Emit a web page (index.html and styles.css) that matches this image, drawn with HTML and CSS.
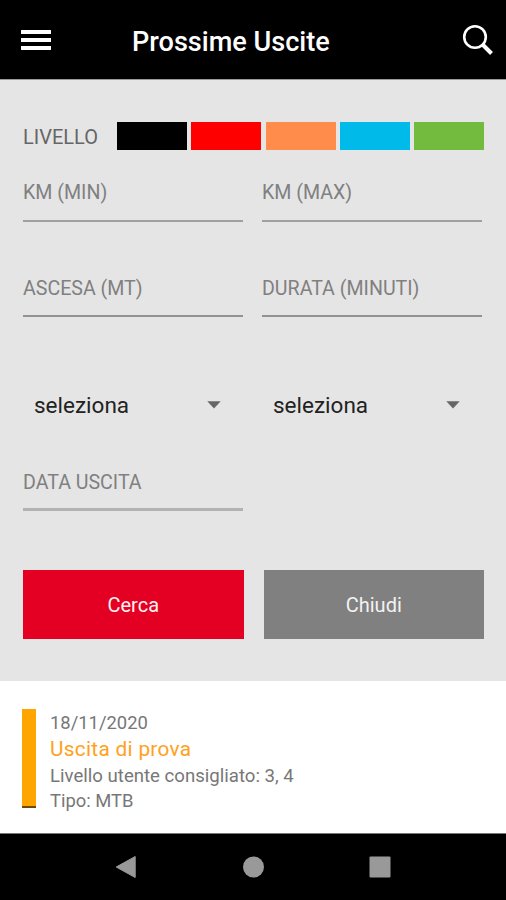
FILE: index.html
```html
<!DOCTYPE html>
<html lang="it">
<head>
<meta charset="utf-8">
<title>Prossime Uscite</title>
<link rel="stylesheet" href="styles.css">
</head>
<body>
<header class="topbar">
  <svg class="menu" width="32" height="22" viewBox="0 0 32 22"><path d="M1 3h30M1 11h30M1 19h30" stroke="#fff" stroke-width="3.8"/></svg>
  <h1 class="title">Prossime Uscite</h1>
  <svg class="search" width="32" height="32" viewBox="0 0 32 32" fill="none" stroke="#fff"><circle cx="13" cy="13" r="10.8" stroke-width="2.6"/><path d="M20.5 20.5l9 9" stroke-width="4"/></svg>
</header>
<main class="filters">
  <div class="levels">
    <span class="levels-label">LIVELLO</span>
    <i class="level black"></i><i class="level red"></i><i class="level orange"></i><i class="level blue"></i><i class="level green"></i>
  </div>
  <div class="fields">
    <div class="field">KM (MIN)</div>
    <div class="field">KM (MAX)</div>
    <div class="field dark">ASCESA (MT)</div>
    <div class="field dark">DURATA (MINUTI)</div>
  </div>
  <div class="selects">
    <div class="select"><span>seleziona</span><svg width="14" height="8" viewBox="0 0 14 8"><path d="M.3.3h13.4L7 7.6z" fill="#666"/></svg></div>
    <div class="select"><span>seleziona</span><svg width="14" height="8" viewBox="0 0 14 8"><path d="M.3.3h13.4L7 7.6z" fill="#666"/></svg></div>
  </div>
  <div class="field date">DATA USCITA</div>
  <div class="actions">
    <button class="btn primary">Cerca</button>
    <button class="btn">Chiudi</button>
  </div>
</main>
<section class="trip">
  <i class="trip-bar"></i>
  <div class="trip-info">
    <div class="when">18/11/2020</div>
    <div class="name">Uscita di prova</div>
    <div class="rider">Livello utente consigliato: 3, 4</div>
    <div class="type">Tipo: MTB</div>
  </div>
</section>
<nav class="navbar">
  <svg width="22" height="24" viewBox="0 0 22 24"><path d="M20.2 1.5v21L1.2 12z" fill="#999" stroke="#999" stroke-linejoin="round"/></svg>
  <svg width="22" height="22" viewBox="0 0 22 22"><circle cx="11.5" cy="11" r="10.5" fill="#999"/></svg>
  <svg width="22" height="22" viewBox="0 0 22 22"><rect x=".5" y=".5" width="21" height="21" rx="1" fill="#999"/></svg>
</nav>
</body>
</html>
```
FILE: styles.css
```css
* { box-sizing: border-box; }
body {
  margin: 0;
  width: 506px;
  height: 900px;
  display: flex;
  flex-direction: column;
  background: #fff;
  font-family: Roboto, "Liberation Sans", sans-serif;
  overflow: hidden;
}
svg { display: block; flex: none; }
.topbar {
  height: 80px;
  flex: none;
  display: flex;
  align-items: flex-start;
  background: #000;
  border-bottom: 1px solid #999;
  color: #fff;
}
.menu { margin: 29px 0 0 20px; }
.title {
  margin: 26px 0 0 80px;
  width: 210px;
  font-size: 27.1px;
  line-height: 32px;
  font-weight: 500;
  white-space: nowrap;
}
.search { margin: 24px 0 0 120px; }
.filters {
  height: 601px;
  flex: none;
  padding: 41px 22px 0 23px;
  background: #e5e5e5;
}
.levels { display: flex; height: 29px; }
.levels-label {
  width: 94px;
  flex: none;
  font-size: 20px;
  line-height: 32px;
  color: #666;
}
.level { width: 70px; height: 28px; margin: 1px 4.3px 0 0; flex: none; }
.black { background: #000; }
.red { background: #f00; }
.orange { background: #ff8c4a; }
.blue { background: #00bbe9; }
.green { background: #73bb3f; }
.fields {
  display: grid;
  grid-template-columns: 220px 220px;
  column-gap: 19px;
  grid-auto-rows: 95px;
  margin-top: 27px;
}
.field {
  width: 220px;
  height: 45px;
  border-bottom: 2px solid #a0a0a0;
  font-size: 19.6px;
  line-height: 31px;
  color: #808080;
}
.dark { border-bottom-color: #909390; line-height: 33px; }
.selects { display: flex; gap: 19px; margin-top: 22px; }
.select {
  width: 220px;
  height: 32px;
  padding: 0 22px 0 11px;
  display: flex;
  align-items: center;
  justify-content: space-between;
  font-size: 22.5px;
  color: #222;
}
.date { margin-top: 45px; border-bottom: 3px solid #b2b2b2; line-height: 33px; }
.actions { display: flex; gap: 20px; margin-top: 59px; }
.btn {
  width: 220.5px;
  height: 69px;
  padding: 1px 0 0;
  border: 0;
  background: #808080;
  color: #f2f2f2;
  font: 400 20px Roboto, sans-serif;
}
.primary { background: #e30022; color: #fff0f0; }
.trip {
  height: 152px;
  flex: none;
  display: flex;
  padding: 28px 0 0 22px;
  color: #777;
}
.trip-bar {
  width: 14px;
  height: 99px;
  background: #ffa500;
  border-bottom: 2px solid #704800;
}
.trip-info { padding-left: 14px; font-size: 18.6px; white-space: nowrap; }
.when { font-size: 18.4px; line-height: 27px; }
.name { font-size: 20.8px; letter-spacing: .3px; line-height: 27px; color: #ffa11c; }
.rider { line-height: 26px; }
.type { font-size: 18.4px; line-height: 24px; }
.navbar {
  flex: 1;
  display: flex;
  align-items: center;
  padding: 0 0 1px 115px;
  gap: 105px;
  background: #000;
  border-top: 1px solid #777;
}
```
